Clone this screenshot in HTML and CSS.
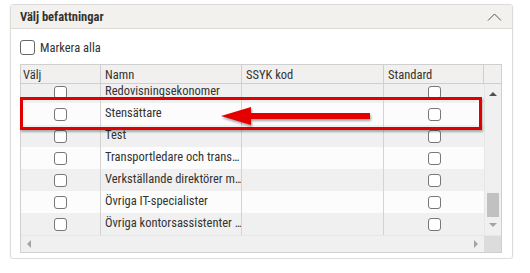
FILE: index.html
```html
<!DOCTYPE html>
<html lang="sv">
<head>
    <meta charset="UTF-8">
    <meta name="viewport" content="width=device-width, initial-scale=1.0">
    <title>Välj befattningar</title>
    <link rel="stylesheet" href="styles.css">
</head>
<body>

<div class="panel">
    <div class="panel-head">
        <h3>Välj befattningar</h3>
        <svg class="chevron" width="15" height="8" viewBox="0 0 15 8">
            <polyline points="1,7.5 7.5,1 14,7.5" fill="none" stroke="#555" stroke-width="1"/>
        </svg>
    </div>

    <div class="panel-body">
        <label class="check-all">
            <span class="box big"></span>
            Markera alla
        </label>

        <div class="table">
            <div class="thead">
                <div class="cell c1">Välj</div>
                <div class="cell c2">Namn</div>
                <div class="cell c3">SSYK kod</div>
                <div class="cell c4">Standard</div>
                <div class="cell c5"></div>
            </div>

            <div class="middle">
                <div class="rows">
                    <div class="row odd first">
                        <div class="cell c1"><span class="box"></span></div>
                        <div class="cell c2">Redovisningsekonomer</div>
                        <div class="cell c3"></div>
                        <div class="cell c4"><span class="box"></span></div>
                    </div>
                    <div class="row">
                        <div class="cell c1"><span class="box"></span></div>
                        <div class="cell c2">Stensättare</div>
                        <div class="cell c3"></div>
                        <div class="cell c4"><span class="box"></span></div>
                    </div>
                    <div class="row odd">
                        <div class="cell c1"><span class="box"></span></div>
                        <div class="cell c2">Test</div>
                        <div class="cell c3"></div>
                        <div class="cell c4"><span class="box"></span></div>
                    </div>
                    <div class="row">
                        <div class="cell c1"><span class="box"></span></div>
                        <div class="cell c2">Transportledare och trans…</div>
                        <div class="cell c3"></div>
                        <div class="cell c4"><span class="box"></span></div>
                    </div>
                    <div class="row odd">
                        <div class="cell c1"><span class="box"></span></div>
                        <div class="cell c2">Verkställande direktörer m…</div>
                        <div class="cell c3"></div>
                        <div class="cell c4"><span class="box"></span></div>
                    </div>
                    <div class="row">
                        <div class="cell c1"><span class="box"></span></div>
                        <div class="cell c2">Övriga IT-specialister</div>
                        <div class="cell c3"></div>
                        <div class="cell c4"><span class="box"></span></div>
                    </div>
                    <div class="row odd">
                        <div class="cell c1"><span class="box"></span></div>
                        <div class="cell c2">Övriga kontorsassistenter …</div>
                        <div class="cell c3"></div>
                        <div class="cell c4"><span class="box"></span></div>
                    </div>
                </div>

                <div class="vscroll">
                    <span class="arrow up"></span>
                    <span class="thumb"></span>
                    <span class="arrow down"></span>
                </div>
            </div>

            <div class="hscroll">
                <div class="htrack">
                    <span class="arrow left"></span>
                    <span class="arrow right"></span>
                </div>
                <div class="corner"></div>
            </div>
        </div>
    </div>
</div>

<!-- annotation drawn on top of the screenshot -->
<div class="highlight"></div>
<svg class="pointer" width="160" height="26" viewBox="0 0 160 26">
    <g class="pointer-shape">
        <polygon points="3,12 33,3 33,21" fill="#e50000"/>
        <rect x="31" y="9" width="121" height="6" fill="#e50000"/>
    </g>
</svg>

</body>
</html>
```

FILE: styles.css
```css
* {
    box-sizing: border-box;
    margin: 0;
    padding: 0;
}
body {
    font-family: "Liberation Sans Narrow", "Roboto Condensed", Roboto, sans-serif;
    font-size: 12.5px;
    color: #333;
    background: #fff;
    padding: 4px 17px 0 10px;
    position: relative;
}
.panel {
    width: 503px;
    border: 1px solid #dcdcdc;
    border-radius: 3px;
    box-shadow: 0 1px 2px rgba(0, 0, 0, 0.08);
}
.panel-head {
    height: 24px;
    background: #f3f1ee;
    border-bottom: 1px solid #dedbd7;
    display: flex;
    align-items: center;
    justify-content: space-between;
    padding: 0 10px 0 9px;
}
.panel-head h3 {
    font-size: 12.5px;
    font-weight: bold;
    color: #333;
}
.chevron {
    margin-top: 1px;
}
.panel-body {
    padding: 11px 10px 5px 9px;
}
.check-all {
    display: flex;
    align-items: center;
    gap: 5px;
    height: 15px;
    margin-bottom: 9px;
}
.box {
    display: inline-block;
    width: 13px;
    height: 13px;
    border: 1px solid #777;
    border-radius: 3px;
    background: #fff;
}
.box.big {
    width: 15px;
    height: 15px;
    border-color: #666;
}

/* table */
.table {
    width: 482px;
    border: 1px solid #cfcfcf;
    background: #fafafa;
}
.thead {
    display: flex;
    height: 19px;
    background: #f1f0ee;
    border-bottom: 1px solid #cfcfcf;
}
.cell {
    height: 100%;
    display: flex;
    align-items: center;
    padding-left: 4px;
    border-right: 1px solid #cfcfcf;
    white-space: nowrap;
    overflow: hidden;
}
.c1 { width: 80px; padding-left: 2px; }
.c2 { width: 141px; }
.c3 { width: 142px; }
.c4 { width: 100px; }
.c5 { width: 17px; border-right: none; }
.row .c1,
.row .c4 {
    justify-content: center;
    padding-left: 0;
}
.row .c4 {
    border-right: none;
}
.row .c2 {
    display: block;
    line-height: 20px;
}
.middle {
    display: flex;
    height: 151px;
    overflow: hidden;
}
.rows {
    width: 463px;
}
.row {
    display: flex;
    height: 22px;
    background: #fcfcfc;
}
.row.odd {
    background: #f0f0f0;
}
.row.first {
    margin-top: -3px;
}
.row .cell {
    border-right-color: #d3d3d3;
}

/* scrollbars */
.vscroll {
    width: 17px;
    background: #f0f0f0;
    position: relative;
    border-left: 1px solid #e6e6e6;
}
.vscroll .thumb {
    position: absolute;
    left: 2px;
    top: 109px;
    width: 12px;
    height: 24px;
    background: #c1c1c1;
}
.arrow {
    position: absolute;
    width: 0;
    height: 0;
    border: 4px solid transparent;
}
.arrow.up {
    left: 4px;
    top: 8px;
    border-bottom-color: #505050;
    border-top-width: 0;
}
.arrow.down {
    left: 4px;
    top: 139px;
    border-top-color: #a3a3a3;
    border-bottom-width: 0;
}
.hscroll {
    display: flex;
    height: 17px;
    border-top: 1px solid #e6e6e6;
}
.htrack {
    width: 463px;
    background: #f0f0f0;
    position: relative;
}
.arrow.left {
    left: 6px;
    top: 4px;
    border-right-color: #a3a3a3;
    border-left-width: 0;
}
.arrow.right {
    left: 453px;
    top: 4px;
    border-left-color: #a3a3a3;
    border-right-width: 0;
}
.corner {
    width: 17px;
    background: #dcdcdc;
}

/* annotation */
.highlight {
    position: absolute;
    left: 20px;
    top: 97px;
    width: 462px;
    height: 33px;
    border: 3px solid #e00000;
    box-shadow: 1px 2px 2px rgba(0, 0, 0, 0.3);
}
.pointer {
    position: absolute;
    left: 218px;
    top: 104px;
}
.pointer-shape {
    filter: drop-shadow(1px 2px 1px rgba(0, 0, 0, 0.35));
}
```
